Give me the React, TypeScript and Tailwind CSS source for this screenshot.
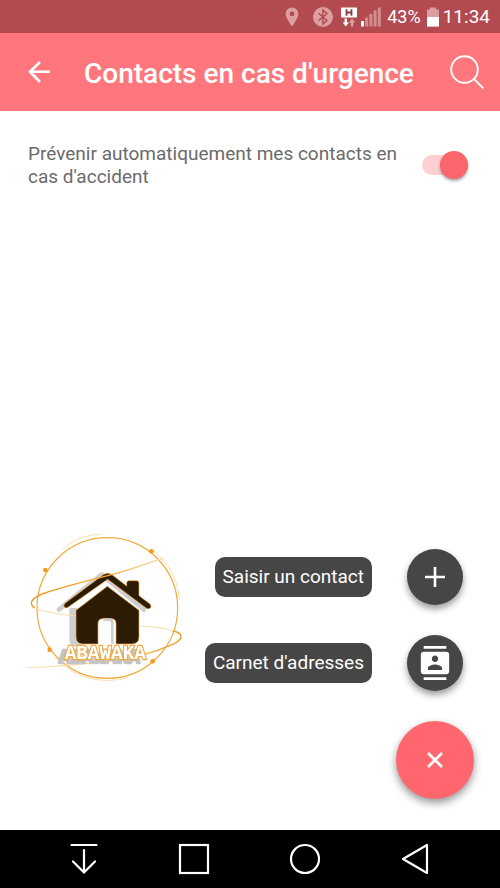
import { useState } from "react";
import { MdContacts } from "react-icons/md";

function StatusBar() {
  return (
    <div className="flex h-[33px] items-center justify-end bg-[#b34a4f] pr-2.5 text-white">
      <svg className="mr-3.5 h-5 w-3.5" viewBox="0 0 14 20" aria-hidden="true">
        <path
          fillRule="evenodd"
          fill="#db9ea1"
          d="M7 0.5a6.3 6.3 0 0 0-6.3 6.3C0.7 11.5 7 19.5 7 19.5s6.3-8 6.3-12.7A6.3 6.3 0 0 0 7 0.5zM7 4.6a2.3 2.3 0 1 1 0 4.6a2.3 2.3 0 0 1 0-4.6z"
        />
      </svg>
      <svg className="mr-2 size-5" viewBox="0 0 20 20" aria-hidden="true">
        <circle cx="10" cy="10" r="10" fill="#db9ea1" />
        <path d="M5.6 6.2l8.4 7.2-4 3.6V3l4 3.6-8.4 7.2" fill="none" stroke="#b34a4f" strokeWidth="1.4" />
      </svg>
      <svg className="mr-1 h-5 w-4" viewBox="0 0 16 20" aria-hidden="true">
        <rect width="16" height="10" rx="0.5" y="0.5" fill="#fff" />
        <path d="M5.5 2.2v6.6M10.5 2.2v6.6M5.5 5.5h5" stroke="#8c3a3e" strokeWidth="1.8" />
        <path d="M3.6 11.5h2.4v4h2l-3.2 4-3.2-4h2z" fill="#fff" />
        <path d="M9.8 19.5h2.4v-4h2l-3.2-4-3.2 4h2z" fill="#db9ea1" />
      </svg>
      <svg className="mr-1.5 h-5 w-5" viewBox="0 0 20 20" aria-hidden="true">
        <rect x="0" y="14" width="3" height="5.5" fill="#fff" />
        <rect x="4.2" y="10.5" width="3" height="9" fill="#d28d90" />
        <rect x="8.4" y="7" width="3" height="12.5" fill="#d28d90" />
        <rect x="12.6" y="3.5" width="3" height="16" fill="#d28d90" />
        <rect x="16.8" y="0.5" width="3" height="19" fill="#d28d90" />
      </svg>
      <span className="mr-1.5 text-lg leading-5">43%</span>
      <svg className="mr-1 h-5 w-3" viewBox="0 0 12 20" aria-hidden="true">
        <path d="M3 0.5h6v2h3v17H0v-17h3z" fill="#db9ea1" />
        <rect y="10" width="12" height="9.5" fill="#fff" />
      </svg>
      <span className="text-[19px] leading-5">11:34</span>
    </div>
  );
}

function Header() {
  return (
    <header className="flex h-[78px] items-center bg-[#ff777c] pr-4 pl-7 text-white">
      <button type="button" aria-label="Retour" className="mr-[34px]">
        <svg className="size-[22px]" viewBox="0 0 22 22" fill="none" stroke="currentColor" strokeWidth="2.6" aria-hidden="true">
          <path d="M22 10.7H2M12 1L2 10.7 12 21" />
        </svg>
      </button>
      <h1 className="flex-1 pt-1 text-[28px] leading-8 font-medium whitespace-nowrap">Contacts en cas d'urgence</h1>
      <button type="button" aria-label="Rechercher">
        <svg className="size-[34px]" viewBox="0 0 34 34" fill="none" stroke="currentColor" strokeWidth="1.9" aria-hidden="true">
          <circle cx="14.5" cy="14.5" r="13.3" />
          <path d="M24 24l9.3 9.3" />
        </svg>
      </button>
    </header>
  );
}

function Logo() {
  return (
    <svg className="h-[165px] w-[170px] shrink-0" viewBox="0 0 510 495" role="img" aria-label="Abawaka">
      <defs>
        <linearGradient id="upper" x1="0" x2="1">
          <stop offset="0" stopColor="#e8981e" />
          <stop offset="0.6" stopColor="#f2ac3c" />
          <stop offset="1" stopColor="#fbe3b8" />
        </linearGradient>
        <linearGradient id="lower" x1="0" x2="1">
          <stop offset="0" stopColor="#fdebcf" />
          <stop offset="0.7" stopColor="#f5b95a" />
          <stop offset="1" stopColor="#e8981e" />
        </linearGradient>
      </defs>
      <g fill="none" stroke="#f3a93a">
        <circle cx="262" cy="249" r="211" strokeWidth="3.5" />
        <path d="M125 75C155 45 195 30 242 28" stroke="#f8cf8b" strokeWidth="2" />
        <path d="M398 74C445 115 475 160 478 225" stroke="#f8cf8b" strokeWidth="2" />
        <path d="M105 395C160 465 260 478 325 457" stroke="#f8cf8b" strokeWidth="2" />
      </g>
      <path d="M148 249h40v116h-20q-20 0-20-22z" fill="#cfcfcf" />
      <path d="M117 254L245 149L372 254" fill="none" stroke="#cfcfcf" strokeWidth="14" strokeLinecap="round" strokeLinejoin="round" />
      <g fill="#2c1c05" stroke="#f0a33a" strokeWidth="2">
        <path d="M320 183v-9q0-7 7-7h23q7 0 7 7v38l32 24q8 8 1 14-5 4-12-1L263 163 144 247q-7 4-11-1-4-6 2-11L250 149q13-9 26 0z" />
        <path d="M262 184l95 72v80q0 21-22 21h-47v-61q0-15-14-15h-25q-15 0-15 15v61h-44q-22 0-22-21v-80z" />
      </g>
      <path d="M250 284h18q9 0 9 9v64" fill="none" stroke="#cfcfcf" strokeWidth="8" />
      <path d="M44 249C22 235 38 216 75 204C170 173 260 155 330 133L430 99" fill="none" stroke="url(#upper)" strokeWidth="4" />
      <path d="M50 252C90 264 130 270 168 273M362 303C410 306 445 311 458 318" fill="none" stroke="#fbdcae" strokeWidth="3" />
      <path d="M458 318C492 324 491 343 458 358C400 384 330 402 255 409C170 419 90 426 20 428" fill="none" stroke="url(#lower)" strokeWidth="4" />
      <g fill="#f29a1f">
        <circle cx="394" cy="79" r="7" />
        <circle cx="76" cy="135" r="7" />
        <circle cx="89" cy="374" r="7" />
        <circle cx="398" cy="409" r="7" />
      </g>
      <text
        x="134"
        y="403"
        className="font-['Liberation_Mono',monospace] text-[58px] font-bold drop-shadow-[-18px_12px_0_#c4c4c4]"
        fill="#fff"
        stroke="#f0a840"
        strokeWidth="7"
        paintOrder="stroke"
        strokeLinejoin="round"
      >
        ABAWAKA
      </text>
    </svg>
  );
}

const miniFab =
  "flex size-14 items-center justify-center rounded-full bg-[#464646] text-white shadow-[0_4px_7px_rgba(0,0,0,0.4)]";
const fabLabel = "rounded-[10px] bg-[#464646] px-2 text-[19px] leading-10 whitespace-nowrap text-white";

function Actions() {
  return (
    <div className="flex flex-col items-end gap-[30px] pt-6">
      <div className="mr-[11px] flex items-center gap-[35px]">
        <label htmlFor="new-contact" className={fabLabel}>Saisir un contact</label>
        <button id="new-contact" type="button" className={miniFab}>
          <svg className="size-5" viewBox="0 0 20 20" stroke="currentColor" strokeWidth="2.6" aria-hidden="true">
            <path d="M10 0v20M0 10h20" />
          </svg>
        </button>
      </div>
      <div className="mr-[11px] flex items-center gap-[35px]">
        <label htmlFor="address-book" className={fabLabel}>Carnet d'adresses</label>
        <button id="address-book" type="button" className={miniFab}>
          <MdContacts className="size-[34px]" aria-hidden="true" />
        </button>
      </div>
      <button
        type="button"
        aria-label="Fermer"
        className="flex size-[78px] items-center justify-center rounded-full bg-[#ff666d] text-white shadow-[0_4px_9px_rgba(0,0,0,0.42)]"
      >
        <svg className="size-4" viewBox="0 0 16 16" stroke="currentColor" strokeWidth="2.8" aria-hidden="true">
          <path d="M1 1l14 14M15 1L1 15" />
        </svg>
      </button>
    </div>
  );
}

function NavBar() {
  return (
    <nav className="flex h-[58px] items-center justify-between bg-black pr-[71px] pl-[70px] text-white">
      <button type="button" aria-label="Notifications">
        <svg className="h-8 w-7" viewBox="0 0 28 32" fill="none" stroke="currentColor" strokeWidth="2.2" strokeLinecap="round" aria-hidden="true">
          <path d="M1.5 2h25M14 7v22M3 18.5l11 11 11-11" />
        </svg>
      </button>
      <button type="button" aria-label="Applications récentes">
        <svg className="size-8" viewBox="0 0 32 32" fill="none" stroke="currentColor" strokeWidth="2.2" aria-hidden="true">
          <rect x="2" y="2" width="28" height="28" />
        </svg>
      </button>
      <button type="button" aria-label="Accueil">
        <svg className="size-8" viewBox="0 0 32 32" fill="none" stroke="currentColor" strokeWidth="2.2" aria-hidden="true">
          <circle cx="16" cy="16" r="14" />
        </svg>
      </button>
      <button type="button" aria-label="Précédent">
        <svg className="h-8 w-7" viewBox="0 0 28 32" fill="none" stroke="currentColor" strokeWidth="2.2" strokeLinejoin="round" aria-hidden="true">
          <path d="M26 2v28L2 16z" />
        </svg>
      </button>
    </nav>
  );
}

export default function App() {
  const [notify, setNotify] = useState(true);

  return (
    <div className="flex min-h-screen flex-col bg-white font-[Roboto,sans-serif]">
      <StatusBar />
      <Header />
      <main className="flex flex-1 flex-col justify-between">
        <div className="flex items-center justify-between gap-4 pt-[31px] pr-8 pl-7">
          <label htmlFor="notify" className="text-[19px] leading-[23px] text-[#6b6b6b]">
            Prévenir automatiquement mes contacts en cas d'accident
          </label>
          <input
            id="notify"
            type="checkbox"
            role="switch"
            checked={notify}
            onChange={(event) => setNotify(event.target.checked)}
            className="flex h-5 w-[46px] shrink-0 appearance-none items-center rounded-full bg-[#ffcfd1] before:size-7 before:shrink-0 before:rounded-full before:bg-[#fb666d] before:shadow-[0_2px_3px_rgba(0,0,0,0.35)] checked:justify-end"
          />
        </div>
        <div className="flex items-start justify-between pr-[26px] pb-[31px] pl-5">
          <Logo />
          <Actions />
        </div>
      </main>
      <NavBar />
    </div>
  );
}
